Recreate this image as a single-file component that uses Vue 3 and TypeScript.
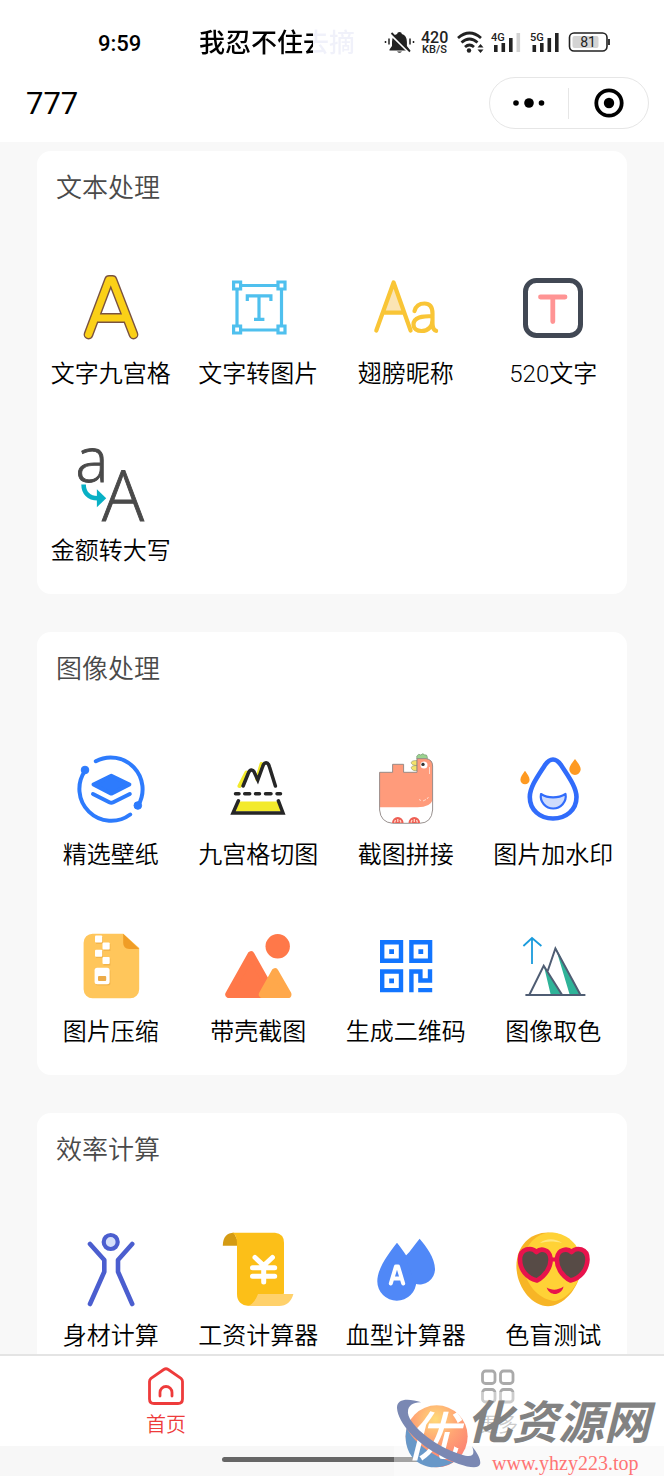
<script setup lang="ts">
import { ref } from 'vue'

interface Tool {
  name: string
  icon: string
}

interface Section {
  title: string
  tools: Tool[]
}

const icons: Record<string, string> = {
  letterGrid: `
    <g fill="none" stroke-linecap="round" stroke-linejoin="round">
      <path stroke="#7a5340" stroke-width="9.800" d="M14.500 64.500 35 10h3.500l21 54.500M21 48h32"/>
      <path stroke="#fbd017" stroke-width="7" d="M14.500 64.500 35 10h3.500l21 54.500M21 48h32"/>
    </g>`,
  textFrame: `
    <g fill="none" stroke="#4fc0ee" stroke-width="3.2">
      <path d="M20 15.500h37M20 60h37M16 19v37M60.500 19v37"/>
      <path d="M12.600 12h7v7h-7zM57 12h7v7h-7zM12.600 56h7v7h-7zM57 56h7v7h-7z"/>
      <path d="M26.300 31v-5.200h23.600V31M38 26v24M33 49.300h10.400"/>
    </g>`,
  wing: `
    <path fill="#fbe4b4" d="M24.600 14 14.500 42h20z"/>
    <g fill="none" stroke="#f9c536" stroke-width="4.200" stroke-linecap="round" stroke-linejoin="round">
      <path d="M7.300 60.500 24.600 12.500l17 48M14.500 42.600h20.500"/>
      <path d="M45.500 41c1.500-5.500 5.500-7.500 10-7.500 6 0 8 4 8 10V53c0 4 1 7 3.600 7.800M63.500 46c-10 0-19 1-19 8.500 0 4.500 4 6.500 8 6.500 7 0 11-5 11-11"/>
    </g>`,
  boxedT: `
    <rect x="9.500" y="10.500" width="55" height="55" rx="11" fill="none" stroke="#414854" stroke-width="5"/>
    <path d="M24.500 27h24.500M36.800 27v24.500" fill="none" stroke="#ff9494" stroke-width="4.800" stroke-linecap="round"/>`,
  letterCase: `
    <g fill="#4a4a4a" stroke="#4a4a4a" stroke-width=".9" font-family="Open Sans, sans-serif" font-weight="300">
      <text x="1.500" y="35" font-size="62">a</text>
      <text x="28" y="73.500" font-size="70">A</text>
    </g>
    <path d="M9.600 37.500c0 8 5 13.800 14 13.800" fill="none" stroke="#08b0c5" stroke-width="4.600"/>
    <path d="M22.900 42.300 32.200 51.300 22.900 60.300z" fill="#08b0c5"/>`,
  wallpaper: `
    <g fill="none" stroke="#2d7bfd" stroke-width="4" stroke-linecap="round" stroke-linejoin="round">
      <path d="M21.800 10.200A31.800 31.800 0 0 1 64 54.700M56.200 63.500A31.800 31.800 0 0 1 11.400 19.400"/>
      <path d="M19 43 35.300 51.300q2 1 4 0L55.800 43"/>
    </g>
    <g fill="#2d7bfd" stroke="#2d7bfd" stroke-linejoin="round">
      <path stroke-width="4" d="M19.500 33.500 37.300 24.800 55.400 33.500 37.300 42.600z"/>
      <circle cx="63.800" cy="54.500" r="3.800"/><circle cx="11" cy="19" r="3.800"/>
    </g>`,
  gridCut: `
    <path d="M18.500 35 25.500 21.500M36 28 40.500 13" stroke="#f3ea2b" stroke-width="4" stroke-linecap="round"/>
    <path d="M18.500 50.500h38l4 10h-46z" fill="#f3ea2b"/>
    <g fill="none" stroke="#262626" stroke-width="3.500" stroke-linecap="round">
      <path d="M22.100 35 27 23c2-5.500 5.500-5 7 0l2.800 6 4.700-13c1.800-6 5.500-5.500 7 0l5.900 19"/>
      <path d="M14.500 42.700h3.500M23.700 42.700h5M34.500 42.700h4M44.500 42.700h5.500M56 42.700h3.500"/>
      <path d="M17.400 49.800 12 62h50l-4.600-12.200" stroke-linejoin="miter"/>
    </g>`,
  chicken: `
    <path d="M47.800 8V5q2-3 4-1 2-2.500 4 0 2-1 2.500 2v3z" fill="#9bd28f" stroke="#7d9b78" stroke-width=".7"/>
    <path d="M48 9.500c-4 0-6.500 1-5.500 3 1 1.500 3 2 5.500 2-4 0-6.500 1-5.500 3 1 2 3 2.500 5.500 2z" fill="#f4e36b" stroke="#9b9b70" stroke-width=".7"/>
    <path d="M10.600 21.300h13v-8h11v8H48V7.600h9q6.600 1 6.600 7.400v44q-1 13-13 13.300h-27q-12-1-13-13.300z" fill="#fff"/>
    <path d="M10.600 21.300h13v-8h11v8H48V7.600h9q6.600 1 6.600 7.400v34q-2 7-15 7.300h-38z" fill="#ff9b7b"/>
    <path d="M10.600 21.300h13v-8h11v8H48V7.600h9q6.600 1 6.600 7.400v44q-1 13-13 13.300h-27q-12-1-13-13.300z" fill="none" stroke="#8d8582" stroke-width=".9"/>
    <circle cx="55" cy="14" r="3.500" fill="#fff"/><circle cx="54" cy="13.400" r="1.700" fill="#333"/>
    <path d="M60.500 16v7M50 48.500l2 1M54 50l3-1.500M58 48l1.500-2" stroke="#ffd7c9" fill="none"/>
    <path d="M23 72a5.800 6 0 0 1 11.600 0zM39.500 72a5.800 6 0 0 1 11.600 0z" fill="#ee5f54"/>
    <path d="M25.500 71.500l1-2.500M28.800 71v-3M32 71.500l-1-2.500M42 71.500l1-2.500M45.300 71v-3M48.500 71.500l-1-2.500" stroke="#ffd7c9" stroke-width="1.300"/>`,
  watermark: `
    <path d="M37 8.500c4 0 6 2.500 8 5.500 7 11 15.500 22 15.500 32C60.500 59 50 67.500 37 67.500S13.800 59 13.800 46c0-10 8.200-21 15.200-32 2-3 4-5.500 8-5.500z" fill="none" stroke="#316cfb" stroke-width="4.600"/>
    <path d="M25 43c7 4.500 17 4.500 24.500 0 1.500 8-5 14.500-12.300 14.500S23.500 51 25 43z" fill="#cfdcfc" stroke="#316cfb" stroke-width="2.200" stroke-linejoin="round"/>
    <path d="M59 8c2.500 3.500 5.700 6.800 5.700 10.300a5.700 5.700 0 0 1-11.400 0C53.300 14.800 56.500 11.500 59 8zM9 19.700c2 3 4.600 5.800 4.600 9a4.600 4.600 0 0 1-9.200 0c0-3.200 2.600-6 4.600-9z" fill="#fe9a22"/>`,
  zip: `
    <path d="M18.600 5.700h30.600L65.200 20v41.300a9 9 0 0 1-9 9H18.600a9 9 0 0 1-9-9V14.700a9 9 0 0 1 9-9z" fill="#ffc65b"/>
    <path d="M49.200 5.700 65.200 21h-10q-6-.5-6-6z" fill="#f09d26"/>
    <g fill="#e6a53d" opacity=".5"><path d="M22 9h7v7h-7zM29.500 16h7v7h-7zM22 23h7v7h-7zM29.500 30.500h7v7h-7z"/><rect x="21.500" y="41" width="15" height="16.500" rx="2.500"/></g>
    <g fill="#fff"><rect x="21" y="7.500" width="7.200" height="7" rx="1"/><rect x="28.500" y="14.500" width="7.200" height="7" rx="1"/><rect x="21" y="21.700" width="7.200" height="7" rx="1"/><rect x="28.500" y="29" width="7.200" height="7" rx="1"/><rect x="20.600" y="39.800" width="15" height="16.400" rx="2.500"/></g>
    <rect x="24" y="48" width="8.200" height="5" rx="1" fill="#ecab48"/>`,
  mountains: `
    <circle cx="56.700" cy="18.300" r="12.200" fill="#ff7849"/>
    <path d="M30 27 8 66.400h44z" fill="#ff7849" stroke="#ff7849" stroke-width="7.400" stroke-linejoin="round"/>
    <path d="M54 44 41.500 66.400h25.300z" fill="#ffa84b" stroke="#ffa84b" stroke-width="7.400" stroke-linejoin="round"/>`,
  qrcode: `
    <g fill="none" stroke="#1275ff" stroke-width="4.400"><path d="M13.200 14.200H32v18.600H13.200zM42.400 14.200h18.700v18.600H42.400zM13.200 43.500H32v18.600H13.200z"/></g>
    <path fill="#1275ff" d="M20.200 21.200H25V26h-4.800zM49.400 21.200h4.800V26h-4.800zM20.200 50.500H25v4.800h-4.800zM40.200 41.300h13.400v9h5.200v-9h4.400v13.400h-14v-9h-4.600v18.600h-4.400zM49.200 59.900h14v4.400h-14z"/>`,
  pickColor: `
    <path d="M16 36V10M7.400 18 16 10l9.400 8" fill="none" stroke="#1a9bdc" stroke-width="1.800"/>
    <path d="M39.400 19 64.400 66.700H53.700zM27.700 37.300 46 66.700H34.700z" fill="#2fb398"/>
    <path d="M9.400 67h60M13.400 66.700 27.700 37.800 46 66.700M31.700 43 39.400 20.500 64.400 66.700" fill="none" stroke="#4f5d73" stroke-width="2"/>`,
  body: `
    <circle cx="36.700" cy="10" r="7" fill="#d5dffa" stroke="#4b5ecf" stroke-width="4.200"/>
    <path d="M16 12 30.300 28v11.700L16 72M58.200 12 44 28v11.700L58.200 72" fill="none" stroke="#4b5ecf" stroke-width="4.600" stroke-linecap="round" stroke-linejoin="round"/>`,
  salary: `
    <path d="M1.800 13.700C1.800 5 6 .7 13 .7l6 13z" fill="#d49b13"/>
    <path d="M11 .7h43q9 1 9 10V74H28q-12-1-12-12V12q0-10-5-11.300z" fill="#fcbf18"/>
    <path d="M63 61h10v14H58z" fill="#fff"/>
    <path d="M37 62h35.400Q69 74 58 74H26q7-1 11-12z" fill="#ffd16b"/>
    <path d="M34 25.500 42.700 33.500 51.400 25.500M31.500 35.700h22.200M31.500 44.300h22.200M42.700 34v16" fill="none" stroke="#fff" stroke-width="5" stroke-linecap="round"/>`,
  blood: `
    <path d="M28 10.700c7 9 19.300 25 19.300 38.500a19.500 19.500 0 0 1-39 0C8.300 35.700 21 19.700 28 10.700z" fill="#5088f7"/>
    <path d="M50.600 6.700C57 14 66 26 66 37a15.400 15.400 0 0 1-20 14.700L36 24.500C42 19 46 12 50.600 6.700z" fill="#5088f7"/>
    <path d="M21.800 51.500 26.900 34.500h2.200l5.100 17M24 46.500h8" fill="none" stroke="#fff" stroke-width="4" stroke-linecap="round" stroke-linejoin="round"/>`,
  emoji: `
    <path d="M32 .4C50 .4 65.500 14 65.500 32 65.500 54 48 74.300 32 74.300S.4 55 .4 34C.4 14 14 .4 32 .4z" fill="#f7b526"/>
    <path d="M36 .6C53 1.500 65.500 15 65.500 32 65.500 52 51 67 39 69 23 68 8 52 8 32 8 13 20 .6 36 .6z" fill="#ffd236"/>
    <path d="M24 11c6-5 15-5 22 0-8-2-15-2-22 0z" fill="#ffe680"/>
    <path d="M34 27.500h9" stroke="#e8134c" stroke-width="4"/>
    <g fill="#574b46" stroke="#e8134c" stroke-width="4.600" stroke-linejoin="round">
      <path d="M20.500 20c-5-5-16.500-4-16.500 7.500C4 38 11 46 21 48.500 29 44 35.500 35 34.500 26c-1-9-10-10-14-6z"/>
      <path d="M55.500 20c5-5 16-4 16 7.500C71 38 64.500 46 54.500 48.500 46 44 40 35 41 26c1-9 10.500-10 14.500-6z"/>
    </g>
    <path d="M30.700 55.500c5 3 11 3 16.800-1C46.500 60 42 62 39 62s-7-2-8.300-6.500z" fill="#e8134c"/>`
}

const sections: Section[] = [
  {
    title: '文本处理',
    tools: [
      { name: '文字九宫格', icon: 'letterGrid' },
      { name: '文字转图片', icon: 'textFrame' },
      { name: '翅膀昵称', icon: 'wing' },
      { name: '520文字', icon: 'boxedT' },
      { name: '金额转大写', icon: 'letterCase' }
    ]
  },
  {
    title: '图像处理',
    tools: [
      { name: '精选壁纸', icon: 'wallpaper' },
      { name: '九宫格切图', icon: 'gridCut' },
      { name: '截图拼接', icon: 'chicken' },
      { name: '图片加水印', icon: 'watermark' },
      { name: '图片压缩', icon: 'zip' },
      { name: '带壳截图', icon: 'mountains' },
      { name: '生成二维码', icon: 'qrcode' },
      { name: '图像取色', icon: 'pickColor' }
    ]
  },
  {
    title: '效率计算',
    tools: [
      { name: '身材计算', icon: 'body' },
      { name: '工资计算器', icon: 'salary' },
      { name: '血型计算器', icon: 'blood' },
      { name: '色盲测试', icon: 'emoji' }
    ]
  }
]

const activeTab = ref<'home' | 'more'>('home')
</script>

<template>
  <div class="screen">
    <header class="top">
      <div class="status">
        <span class="clock">9:59</span>
        <span class="ticker">我忍不住去摘</span>
        <svg class="indicators" viewBox="384 29 228 28" aria-hidden="true">
          <g fill="#222" stroke="#222">
            <path stroke="none" d="M399.500 32q2.200 0 2.400 2 5 1.500 5 8v4l2.600 3.500v1h-20v-1l2.500-3.500v-4q0-6.500 5.100-8 .2-2 2.400-2zM397 51.500h5q-2.500 2.600-5 0z" />
            <path d="M390 33.500 409 52" stroke="#fff" stroke-width="2.500" />
            <path d="M391.500 33 410 51.500" stroke-width="1.800" />
            <path d="M385.500 41v2M389 38.500v6M410 38.500v6M413.500 41v2" stroke-width="1.500" />
          </g>
          <g fill="#222" font-family="Roboto, sans-serif" font-weight="500">
            <text x="421" y="43" font-size="16">420</text>
            <text x="422" y="53" font-size="11">KB/S</text>
            <text x="491" y="41" font-size="11">4G</text>
            <text x="530" y="41" font-size="11">5G</text>
          </g>
          <g fill="none" stroke="#222" stroke-width="2.800">
            <path d="M458 38q11.500-10 23 0M461.500 42.500q8-7 16 0M465 47q4.500-4 9 0" />
          </g>
          <circle cx="469" cy="50.500" r="2.200" fill="#222" />
          <path d="m480.500 44 3 3.500h-6zM480.500 53l3-3.500h-6z" fill="#222" />
          <path d="M494 45h3.600v7H494zM501.500 43h3.600v9h-3.600zM509 38h3.600v14H509zM532.500 45h3.600v7h-3.600zM540 43h3.600v9H540zM547.500 38h3.600v14h-3.600zM555 33h3.600v19H555z" fill="#222" />
          <path d="M516.500 33h3.600v19h-3.600z" fill="#d2d2d2" />
          <rect x="569.500" y="33" width="37.500" height="18" rx="4.500" fill="#fff" stroke="#222" stroke-width="1.600" />
          <rect x="572.500" y="36" width="26" height="12" rx="2" fill="#d4d4d4" />
          <path d="M609 39v6" stroke="#222" stroke-width="1.800" />
          <text x="588" y="47" font-size="14" font-family="Roboto, sans-serif" text-anchor="middle" fill="#222">81</text>
        </svg>
      </div>
      <div class="navbar">
        <h1>777</h1>
        <div class="capsule">
          <button type="button" aria-label="更多操作">
            <svg width="36" height="32" viewBox="0 0 36 32"><circle cx="5" cy="16" r="2.800" /><circle cx="18" cy="16" r="4.800" /><circle cx="30.500" cy="16" r="2.800" /></svg>
          </button>
          <button type="button" aria-label="关闭">
            <svg width="32" height="32" viewBox="0 0 32 32"><circle cx="16" cy="16" r="12.700" fill="none" stroke="#000" stroke-width="3.800" /><circle cx="16" cy="16" r="5.200" /></svg>
          </button>
        </div>
      </div>
    </header>

    <main class="content">
      <section v-for="section in sections" :key="section.title" class="card">
        <h2>{{ section.title }}</h2>
        <div class="grid">
          <button v-for="tool in section.tools" :key="tool.name" type="button" class="tool">
            <svg class="tool-icon" viewBox="0 0 74 74" aria-hidden="true" v-html="icons[tool.icon]"></svg>
            <span>{{ tool.name }}</span>
          </button>
        </div>
      </section>
    </main>

    <footer class="bottom">
      <nav class="tabs">
        <button type="button" :class="{ active: activeTab === 'home' }" @click="activeTab = 'home'">
          <svg width="40" height="40" viewBox="0 0 40 40" fill="none" stroke="currentColor" stroke-width="2.800" stroke-linecap="round" stroke-linejoin="round">
            <path d="M3.500 15.500q0-2 1.500-3.200L17.800 3.500q2.200-1.500 4.400 0L35 12.300q1.500 1.200 1.500 3.200V33q0 4.500-4.500 4.500H8q-4.500 0-4.500-4.500z" />
            <path d="M14 30v-3.500a6 6 0 0 1 12 0V30" />
          </svg>
          <span>首页</span>
        </button>
        <button type="button" :class="{ active: activeTab === 'more' }" @click="activeTab = 'more'">
          <svg width="40" height="40" viewBox="0 0 40 40" fill="none" stroke="currentColor" stroke-width="2.800">
            <rect x="4.500" y="5" width="12.500" height="12.500" rx="3" /><rect x="22.500" y="5" width="12.500" height="12.500" rx="3" /><rect x="4.500" y="23.500" width="12.500" height="12.500" rx="3" /><rect x="22.500" y="23.500" width="12.500" height="12.500" rx="3" />
          </svg>
          <span>更多</span>
        </button>
      </nav>
      <div class="gesture"><i></i></div>
      <div class="brand">
        <svg class="brand-logo" viewBox="40 130 264 228" aria-hidden="true">
          <defs>
            <radialGradient id="sun" cx=".48" cy=".22" r=".8">
              <stop offset="0" stop-color="#ffdb78" />
              <stop offset=".45" stop-color="#ffa474" />
              <stop offset="1" stop-color="#fb7a72" />
            </radialGradient>
          </defs>
          <circle cx="168" cy="257" r="93" fill="url(#sun)" />
          <path d="M78 232C100 275 150 315 218 335 170 362 112 352 86 306 74 282 72 256 78 232z" fill="#6898c8" />
          <text x="74" y="316" font-size="160" font-weight="500" font-style="italic" font-family="Noto Sans CJK SC, sans-serif" fill="#fff">优</text>
          <path d="M122 155C85 143 48 142 49 172 52 218 110 280 180 315c50 28 112 46 118 26 4-14-8-34-24-54 9 22 4 33-20 28C175 297 86 226 82 188c-2-22 14-34 40-33z" fill="#7a88b3" />
        </svg>
        <div class="brand-text">
          <strong>化资源网</strong>
          <a href="#">www.yhzy223.top</a>
        </div>
      </div>
    </footer>
  </div>
</template>

<style>
body {
  margin: 0;
}
</style>

<style scoped>
.screen {
  display: flex;
  flex-direction: column;
  height: 100vh;
  overflow: hidden;
  background: #f8f8f8;
  color: #000;
  font-family: Roboto, "Noto Sans CJK SC", sans-serif;
}

button {
  padding: 0;
  border: 0;
  background: none;
  color: inherit;
  font: inherit;
  cursor: pointer;
}

.top {
  flex: none;
  background: #fff;
}

.status {
  display: flex;
  align-items: center;
  height: 73px;
  padding: 13px 52px 0 98px;
  box-sizing: border-box;
}

.clock {
  width: 101px;
  font-size: 22px;
  font-weight: 500;
}

.ticker {
  font-size: 26px;
  font-weight: 500;
  line-height: 36px;
  white-space: nowrap;
  color: transparent;
  background: linear-gradient(90deg, #000 114px, #f0f1fa 114px);
  background-clip: text;
}

.indicators {
  width: 228px;
  height: 28px;
  margin-left: auto;
}

.navbar {
  display: flex;
  align-items: center;
  justify-content: space-between;
  padding: 4px 15px 13px 26px;
}

h1 {
  margin: 0;
  padding-top: 2px;
  font-size: 31px;
  font-weight: 400;
  line-height: 42px;
}

.capsule {
  display: flex;
  align-items: center;
  width: 160px;
  height: 52px;
  box-sizing: border-box;
  border: 1px solid #e6e6e6;
  border-radius: 26px;
}

.capsule button {
  display: flex;
  flex: 1;
  align-items: center;
  justify-content: center;
  height: 31px;
}

.capsule button + button {
  padding-left: 2px;
  border-left: 1px solid #e6e6e6;
}

.content {
  display: flex;
  flex: 1;
  flex-direction: column;
  gap: 38px;
  min-height: 0;
  padding: 9px 37px 0;
  overflow-y: auto;
  scrollbar-width: none;
}

.card {
  flex: none;
  border-radius: 14px;
  background: #fff;
}

h2 {
  margin: 0;
  padding: 17px 19px 32px;
  color: #4a4a4a;
  font-size: 26px;
  font-weight: 350;
  line-height: 40px;
}

.grid {
  display: grid;
  grid-template-columns: repeat(4, 1fr);
}

.tool {
  display: flex;
  flex-direction: column;
  align-items: center;
  gap: 13px;
  padding: 30px 0 26px;
  font-size: 24px;
  font-weight: 350;
  line-height: 34px;
  white-space: nowrap;
}

.tool-icon {
  width: 74px;
  height: 74px;
  overflow: visible;
}

.bottom {
  position: relative;
  flex: none;
}

.tabs {
  display: flex;
  border-top: 2px solid #e4e4e4;
  background: #fff;
}

.tabs button {
  display: flex;
  flex: 1;
  flex-direction: column;
  align-items: center;
  gap: 5px;
  padding: 10px 0 7px;
  color: #aaa;
  font-size: 20px;
  font-weight: 350;
  line-height: 28px;
}

.tabs .active {
  color: #ee3b3b;
}

.gesture {
  display: flex;
  justify-content: center;
  padding: 11px 0 14px;
  background: #f7f7f7;
}

.gesture i {
  width: 220px;
  height: 5px;
  border-radius: 3px;
  background: #666;
}

.brand {
  position: absolute;
  right: 0;
  bottom: 0;
  display: flex;
  align-items: flex-end;
  height: 84px;
  background: rgba(255, 255, 255, 0.4);
}

.brand-logo {
  width: 88px;
  height: 76px;
  margin-bottom: 6px;
}

.brand-text {
  display: flex;
  flex-direction: column;
  width: 182px;
}

.brand-text strong {
  margin-left: -16px;
  color: #828282;
  font-size: 46px;
  font-style: italic;
  font-weight: 700;
  line-height: 54px;
  white-space: nowrap;
}

.brand-text a {
  padding-left: 10px;
  color: #ff7474;
  font-family: "Liberation Serif", serif;
  font-size: 20px;
  line-height: 26px;
  text-decoration: none;
}
</style>
